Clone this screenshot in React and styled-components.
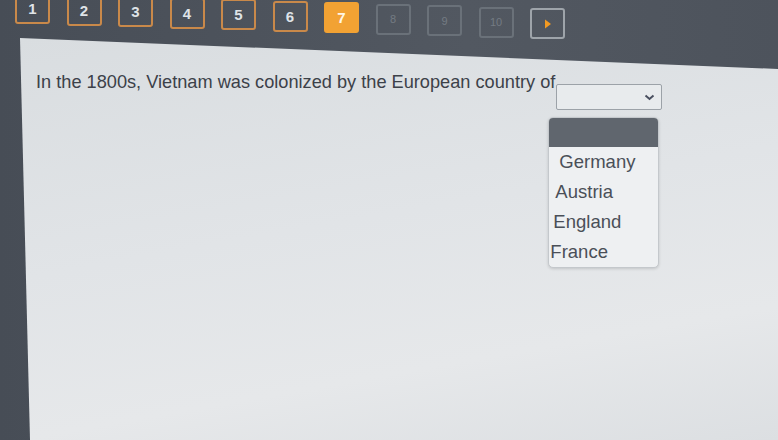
import styled, { createGlobalStyle } from 'styled-components';

const GlobalStyle = createGlobalStyle`
  html, body {
    margin: 0;
    padding: 0;
    background: #4a5059;
    font-family: "Liberation Sans", Arial, sans-serif;
    overflow: hidden;
  }
`;

const Screen = styled.div`
  width: 778px;
  height: 440px;
  display: flex;
  flex-direction: column;
  background: linear-gradient(90deg, #474d56 0%, #525861 60%, #4d535c 100%);
  overflow: hidden;
`;

const Toolbar = styled.div`
  height: 38px;
  display: flex;
  align-items: flex-start;
  gap: 16.5px;
  padding-left: 15px;
  flex-shrink: 0;
`;

const PageButton = styled.div`
  width: 35px;
  height: 31px;
  margin-top: ${p => p.$offset}px;
  box-sizing: border-box;
  border-radius: 3px;
  display: flex;
  align-items: center;
  justify-content: center;
  border: 2px solid ${p => (p.$kind === 'done' ? '#c9894a' : p.$kind === 'current' ? '#f2a233' : p.$kind === 'next' ? '#9ea4aa' : '#6a7179')};
  background: ${p => (p.$kind === 'current' ? '#f2a233' : 'transparent')};
  color: ${p => (p.$kind === 'done' ? '#dfe3e7' : p.$kind === 'current' ? '#fff6e6' : '#747b83')};
  font-weight: ${p => (p.$kind === 'todo' ? 'normal' : 'bold')};
  font-size: ${p => (p.$kind === 'todo' ? '11px' : '15px')};
`;

const Panel = styled.div`
  flex: 1;
  margin-left: 20px;
  position: relative;
  background: linear-gradient(170deg, #d9dde0 0%, #e1e4e7 45%, #e6e8ea 75%, #dcdfe2 100%);
  clip-path: polygon(0 0, 100% 31px, 100% 100%, 10px 100%);
  padding: 32px 0 0 16px;
`;

const Question = styled.div`
  display: flex;
  align-items: flex-start;
  color: #3c4149;
  font-size: 18.2px;
`;

const Prompt = styled.span`
  margin-top: 2px;
`;

const Blank = styled.div`
  position: relative;
  margin-left: 1px;
  margin-top: 14px;
`;

const SelectBox = styled.div`
  width: 106px;
  height: 26px;
  box-sizing: border-box;
  border: 1.5px solid #9ca2a8;
  border-radius: 2px;
  background: #e8ebed;
  display: flex;
  align-items: center;
  justify-content: flex-end;
  padding-right: 6px;
`;

const Menu = styled.div`
  position: absolute;
  top: 33px;
  left: -8px;
  width: 109px;
  background: #eef0f2;
  border: 1px solid #c4c8cc;
  border-radius: 5px;
  box-shadow: 0 1px 3px rgba(0, 0, 0, 0.15);
  overflow: hidden;
`;

const MenuHeader = styled.div`
  height: 29px;
  background: #60666e;
`;

const Option = styled.div`
  height: 30px;
  line-height: 30px;
  font-size: 18.5px;
  color: #4a4f58;
  padding-left: ${p => p.$indent}px;
`;

const pages = [
  { label: '1', kind: 'done' },
  { label: '2', kind: 'done' },
  { label: '3', kind: 'done' },
  { label: '4', kind: 'done' },
  { label: '5', kind: 'done' },
  { label: '6', kind: 'done' },
  { label: '7', kind: 'current' },
  { label: '8', kind: 'todo' },
  { label: '9', kind: 'todo' },
  { label: '10', kind: 'todo' },
];

const options = [
  { name: 'Germany', indent: 10 },
  { name: 'Austria', indent: 6 },
  { name: 'England', indent: 4 },
  { name: 'France', indent: 1 },
];

export default function App() {
  return (
    <>
      <GlobalStyle />
      <Screen>
        <Toolbar>
          {pages.map((p, i) => (
            <PageButton key={p.label} $kind={p.kind} $offset={-7 + i * 1.5}>
              {p.label}
            </PageButton>
          ))}
          <PageButton $kind="next" $offset={8}>
            <svg width="8" height="10" viewBox="0 0 8 10">
              <path d="M1 0.5 L7 5 L1 9.5 Z" fill="#f29a22" />
            </svg>
          </PageButton>
        </Toolbar>
        <Panel>
          <Question>
            <Prompt>In the 1800s, Vietnam was colonized by the European country of</Prompt>
            <Blank>
              <SelectBox>
                <svg width="11" height="7" viewBox="0 0 11 7">
                  <path d="M1.5 1.5 L5.5 5 L9.5 1.5" fill="none" stroke="#4a5060" strokeWidth="2" />
                </svg>
              </SelectBox>
              <Menu>
                <MenuHeader />
                {options.map(o => (
                  <Option key={o.name} $indent={o.indent}>{o.name}</Option>
                ))}
              </Menu>
            </Blank>
          </Question>
        </Panel>
      </Screen>
    </>
  );
}
